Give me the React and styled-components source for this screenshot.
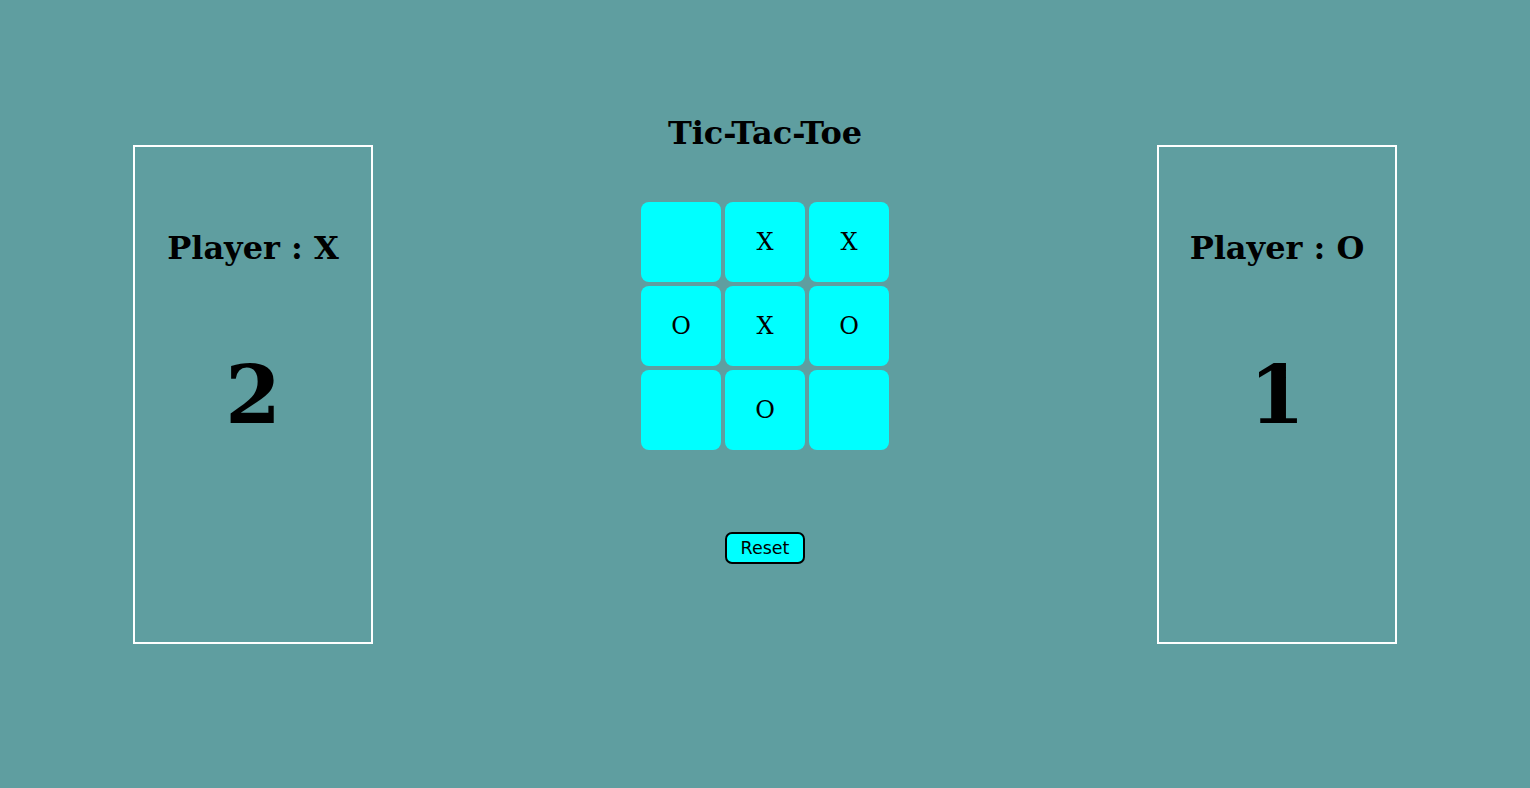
import React, { Component } from 'react';
import styled, { createGlobalStyle } from 'styled-components';

const GlobalStyle = createGlobalStyle`
  html, body {
    margin: 0;
    padding: 0;
    background: #5f9ea0;
  }
  body {
    font-family: "DejaVu Serif", serif;
  }
`;

const Page = styled.div`
  display: flex;
  justify-content: space-between;
  align-items: flex-start;
  padding: 0 133px;
  height: 788px;
  box-sizing: border-box;
`;

const ScoreCard = styled.div`
  margin-top: 145px;
  width: 240px;
  height: 499px;
  box-sizing: border-box;
  border: 2px solid #fff;
  display: flex;
  flex-direction: column;
  align-items: center;
  padding-top: 81px;
`;

const PlayerName = styled.div`
  font-size: 32px;
  line-height: 40px;
  font-weight: bold;
  color: #000;
`;

const Score = styled.div`
  margin-top: 87px;
  font-size: 80px;
  line-height: 80px;
  font-weight: bold;
  color: #000;
`;

const Center = styled.div`
  display: flex;
  flex-direction: column;
  align-items: center;
  padding-top: 113px;
`;

const Title = styled.div`
  font-size: 32px;
  line-height: 40px;
  font-weight: bold;
  color: #000;
`;

const Board = styled.div`
  margin-top: 49px;
  display: grid;
  grid-template-columns: repeat(3, 80px);
  grid-auto-rows: 80px;
  gap: 4px;
`;

const Cell = styled.div`
  background: #00ffff;
  border-radius: 8px;
  display: flex;
  align-items: center;
  justify-content: center;
  font-size: 24px;
  color: #000;
  cursor: pointer;
`;

const ResetButton = styled.button`
  margin-top: 82px;
  width: 80px;
  height: 32px;
  background: #00ffff;
  border: 2px solid #000;
  border-radius: 7px;
  font-family: "DejaVu Sans", sans-serif;
  font-size: 17.5px;
  color: #000;
  padding: 0;
  cursor: pointer;
`;

class App extends Component {
  constructor(props) {
    super(props);
    this.state = {
      squares: ['', 'X', 'X', 'O', 'X', 'O', '', 'O', ''],
      scoreX: 2,
      scoreO: 1
    };
  }

  handleReset = () => {
    this.setState({ squares: Array(9).fill('') });
  };

  render() {
    const { squares, scoreX, scoreO } = this.state;
    return (
      <Page>
        <GlobalStyle />
        <ScoreCard>
          <PlayerName>Player : X</PlayerName>
          <Score>{scoreX}</Score>
        </ScoreCard>
        <Center>
          <Title>Tic-Tac-Toe</Title>
          <Board>
            {squares.map((sq, i) => (
              <Cell key={i}>{sq}</Cell>
            ))}
          </Board>
          <ResetButton onClick={this.handleReset}>Reset</ResetButton>
        </Center>
        <ScoreCard>
          <PlayerName>Player : O</PlayerName>
          <Score>{scoreO}</Score>
        </ScoreCard>
      </Page>
    );
  }
}

export default App;
